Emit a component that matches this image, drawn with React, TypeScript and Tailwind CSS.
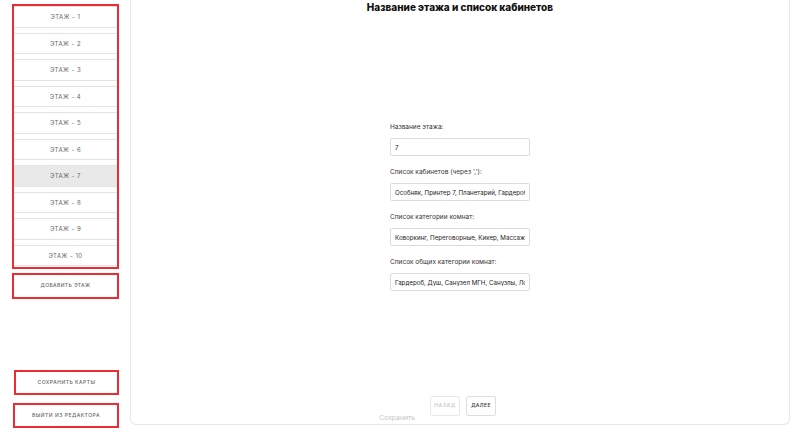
import React, { useState } from 'react';

const floors = Array.from({ length: 10 }, (_, i) => i + 1);

const fields = [
  { label: 'Название этажа:', value: '7' },
  { label: "Список кабинетов (через ','):", value: 'Особняк, Принтер 7, Планетарий, Гардероб, Переговорная 1' },
  { label: 'Список категории комнат:', value: 'Коворкинг, Переговорные, Кикер, Массажная' },
  { label: 'Список общих категории комнат:', value: 'Гардероб, Душ, Санузел МГН, Санузлы, Лобби' },
];

export default function App() {
  const [active, setActive] = useState(7);

  return (
    <div
      className="flex h-[433px] w-[800px] overflow-hidden bg-white text-[#333]"
      style={{ fontFamily: 'Inter, "Noto Sans", sans-serif' }}
    >
      {/* ---- боковая панель ---- */}
      <aside className="ml-[12px] flex w-[107px] flex-col pt-[4px] pb-[5px]">
        <div className="flex flex-col gap-[5px] border-[2px] border-[#ee2a32] bg-white pb-[1px]">
          {floors.map((n) => (
            <button
              key={n}
              onClick={() => setActive(n)}
              className={`h-[21.5px] w-full border-y border-[#e3e3e3] text-[6px] uppercase tracking-[0.08em] text-[#666] ${
                active === n ? 'bg-[#e9e9e9]' : 'bg-white'
              }`}
            >
              Этаж - {n}
            </button>
          ))}
        </div>

        <button className="mt-[4px] h-[26px] w-full border-[2px] border-[#ee2a32] text-[5px] font-medium uppercase tracking-[0.08em] text-[#666]">
          Добавить этаж
        </button>

        <div className="flex-1" />

        <button className="ml-[2px] h-[25px] w-[105px] border-[2px] border-[#ee2a32] text-[5px] font-medium uppercase tracking-[0.1em] text-[#666]">
          Сохранить карты
        </button>
        <button className="ml-[1px] mt-[8px] h-[25px] w-[106px] border-[2px] border-[#ee2a32] text-[5px] font-medium uppercase tracking-[0.1em] text-[#666]">
          Выйти из редактора
        </button>
      </aside>

      {/* ---- основная область ---- */}
      <main className="ml-[11px] flex h-[425px] w-[660px] flex-col rounded-b-[6px] border-x border-b border-[#e8e8e8]">
        <h2 className="pt-[1px] text-center text-[10px] font-extrabold leading-[13px] text-[#111]">
          Название этажа и список кабинетов
        </h2>

        <div className="flex flex-1 items-center justify-center pt-[4px]">
          <form className="flex w-[140px] flex-col" onSubmit={(e) => e.preventDefault()}>
            {fields.map((f, i) => (
              <label key={f.label} className={`flex flex-col ${i > 0 ? 'mt-[12px]' : ''}`}>
                <span className="text-[6.5px] leading-[9px] text-[#333]">{f.label}</span>
                <input
                  defaultValue={f.value}
                  className="mt-[6px] h-[18px] w-[140px] rounded-[2px] border border-[#dcdcdc] bg-white px-[4px] text-[6.2px] text-[#222] outline-none"
                />
              </label>
            ))}
          </form>
        </div>

        <div className="grid grid-cols-[1fr_auto_1fr] items-end pb-[2px]">
          <div className="flex justify-end pr-[9px]">
            <span className="text-[6.8px] leading-[9px] text-[#c4c4c4]">Сохранить</span>
          </div>
          <div className="ml-[6px] flex gap-[6px] pb-[6px]">
            <button className="h-[20px] w-[30px] rounded-[2px] border border-[#eaeaea] text-[5px] font-semibold uppercase tracking-[0.12em] text-[#c8c8c8]">
              Назад
            </button>
            <button className="h-[20px] w-[30px] rounded-[2px] border border-[#dedede] text-[5px] font-semibold uppercase tracking-[0.08em] text-[#444]">
              Далее
            </button>
          </div>
          <div />
        </div>
      </main>
    </div>
  );
}
